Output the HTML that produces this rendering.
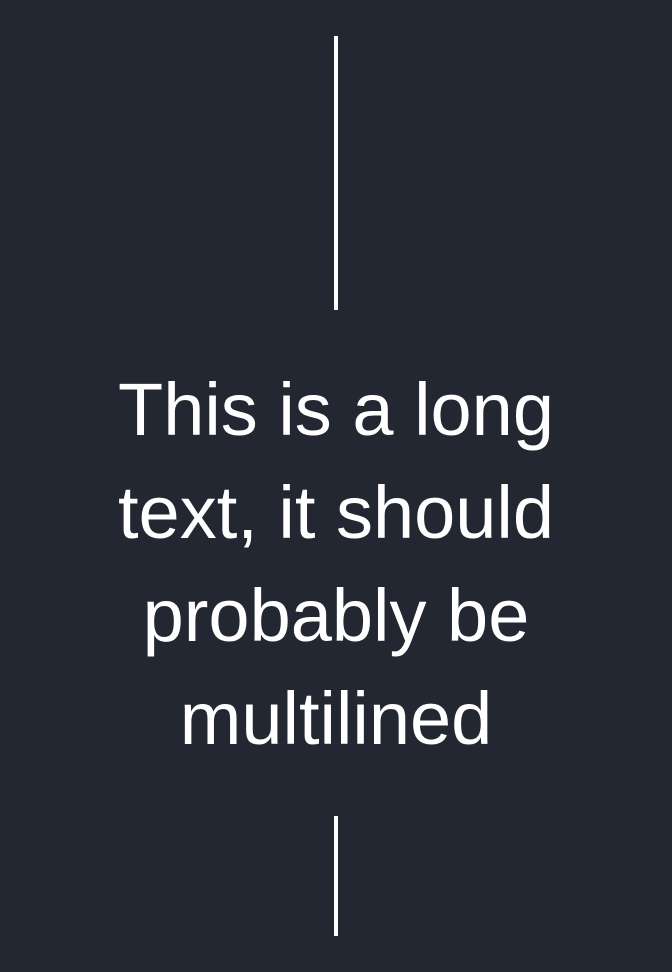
<!DOCTYPE html>
<html><head><meta charset="utf-8"><style>
html,body{margin:0;padding:0;}
body{width:672px;height:972px;background:#222731;position:relative;overflow:hidden;font-family:"Liberation Sans",sans-serif;}
.l{position:absolute;left:334px;width:4px;background:#fff;}
.t{position:absolute;left:0;width:672px;top:358px;text-align:center;color:#fff;font-size:74px;line-height:103px;}
</style></head><body>
<div class="l" style="top:36px;height:274px"></div>
<div class="t">This is a long<br>text, it should<br>probably be<br>multilined</div>
<div class="l" style="top:816px;height:120px"></div>
</body></html>
